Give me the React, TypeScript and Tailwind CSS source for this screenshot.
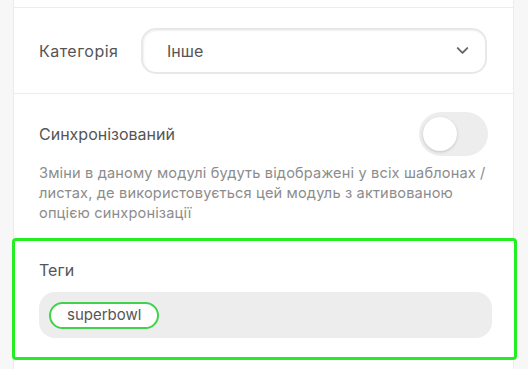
import React from 'react'
import { ChevronDown } from 'lucide-react'

const font = { fontFamily: 'Inter, "Noto Sans", sans-serif' }

export default function App() {
  return (
    <div className="flex h-[369px] w-[528px] overflow-hidden bg-[#f7f7f7]" style={font}>
      {/* left rail */}
      <div className="w-[14px] shrink-0 border-r border-[#ececec] bg-[#f7f7f7]" />

      {/* panel */}
      <div className="flex w-[500px] shrink-0 flex-col border-r border-[#ececec] bg-white">
        <div className="h-[8px] shrink-0 border-b border-[#ececec]" />

        {/* category */}
        <div className="flex h-[86px] shrink-0 items-center border-b border-[#ececec] pl-[25px] pr-[26px]">
          <span className="w-[102px] shrink-0 text-[16px] tracking-[0.03em] text-[#555]">Категорія</span>
          <div className="flex h-[46px] flex-1 items-center justify-between rounded-[15px] border-2 border-[#e8e8e8] bg-white pl-[24px] pr-[13px] shadow-[inset_1px_1px_2px_rgba(0,0,0,0.06)]">
            <span className="text-[16px] text-[#555]">Інше</span>
            <ChevronDown size={19} strokeWidth={2.4} className="text-[#666]" />
          </div>
        </div>

        {/* sync */}
        <div className="flex flex-col pl-[25px] pr-[25px] pt-[18px]">
          <div className="flex items-center justify-between">
            <span className="text-[16px] text-[#555]">Синхронізований</span>
            <div className="flex h-[44px] w-[69px] items-center rounded-full bg-[#ededed] px-[4px]">
              <div className="h-[34px] w-[34px] rounded-full bg-white shadow-[0_1px_3px_rgba(0,0,0,0.18)]" />
            </div>
          </div>
          <p className="mt-[7px] whitespace-nowrap text-[14.6px] leading-[20px] tracking-[0.01em] text-[#8c8c8c]">
            Зміни в даному модулі будуть відображені у всіх шаблонах /
            <br />
            листах, де використовується цей модуль з активованою
            <br />
            опцією синхронізації
          </p>
        </div>

        {/* tags (selected) */}
        <div className="relative z-10 -ml-[2px] -mr-[4px] mt-[15px] flex h-[122px] shrink-0 flex-col rounded-[4px] border-[3px] border-[#22ee22] bg-white pl-[24px] pr-[22px] pt-[17px]">
          <span className="text-[16px] leading-[24px] text-[#555]">Теги</span>
          <div className="mt-[10px] flex h-[46px] items-center rounded-[16px] bg-[#ededed] px-[10px]">
            <span className="flex h-[27px] items-center rounded-full border-2 border-[#3fd24a] bg-white px-[16px] text-[15px] text-[#555]">
              superbowl
            </span>
          </div>
        </div>
      </div>

      {/* right rail */}
      <div className="flex-1 bg-[#f7f7f7]" />
    </div>
  )
}
